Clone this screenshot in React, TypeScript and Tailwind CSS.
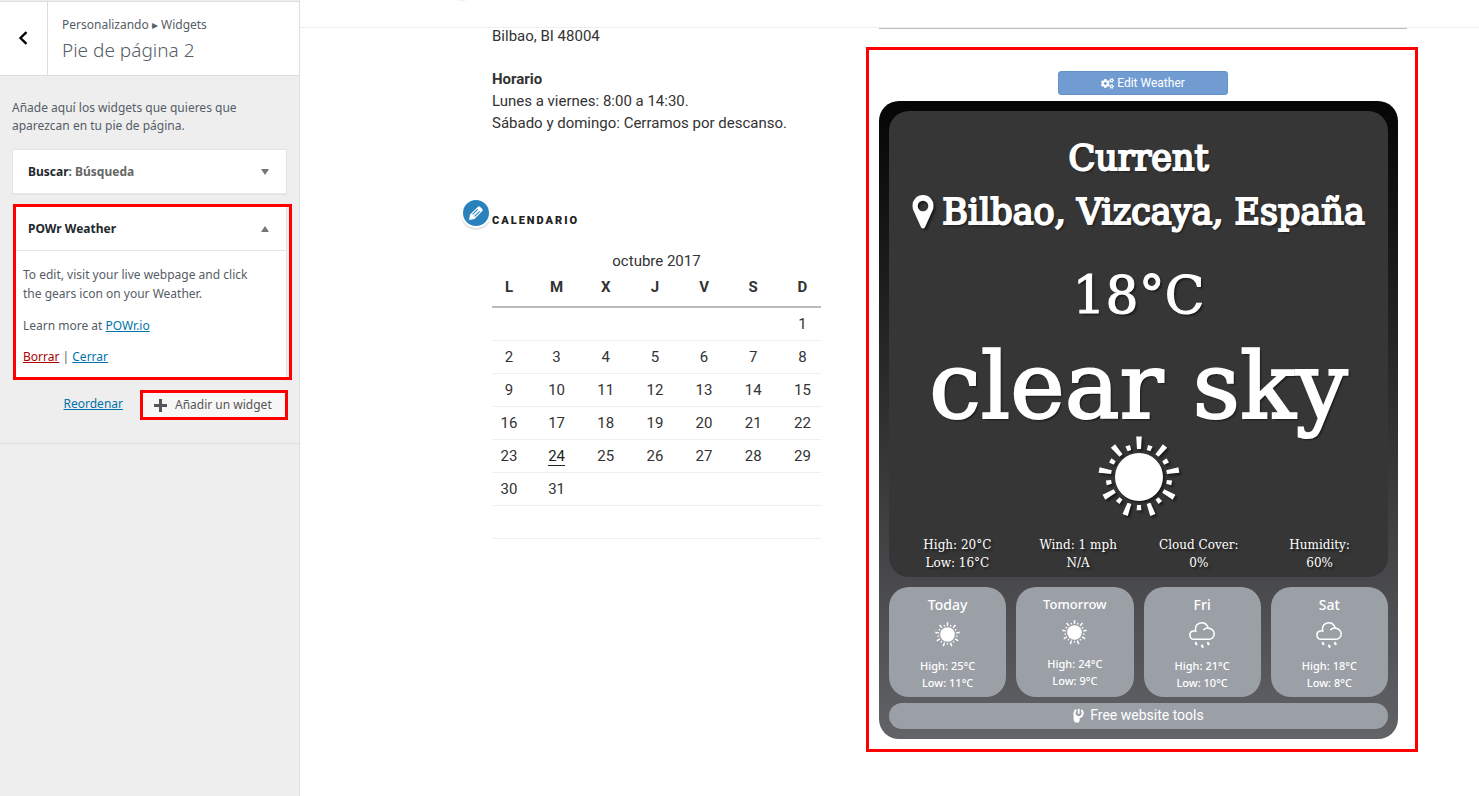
import React from 'react';
import { FaCogs } from 'react-icons/fa';

const WEEKDAYS = ['L', 'M', 'X', 'J', 'V', 'S', 'D'];
const WEEKS: (number | null)[][] = [
  [null, null, null, null, null, null, 1],
  [2, 3, 4, 5, 6, 7, 8],
  [9, 10, 11, 12, 13, 14, 15],
  [16, 17, 18, 19, 20, 21, 22],
  [23, 24, 25, 26, 27, 28, 29],
  [30, 31, null, null, null, null, null],
  [null, null, null, null, null, null, null],
];

const DETAILS = [
  ['High: 20°C', 'Low: 16°C'],
  ['Wind: 1 mph', 'N/A'],
  ['Cloud Cover:', '0%'],
  ['Humidity:', '60%'],
];

const FORECAST = [
  { day: 'Today', icon: 'sun', high: '25', low: '11' },
  { day: 'Tomorrow', icon: 'sun', high: '24', low: '9' },
  { day: 'Fri', icon: 'rain', high: '21', low: '10' },
  { day: 'Sat', icon: 'rain', high: '18', low: '8' },
];

const RAY_ANGLES = [0, 40, 80, 120, 160, 200, 240, 280, 320];

function Sun({ className }: { className: string }) {
  return (
    <svg viewBox="-41 -41 82 82" className={className} fill="white" aria-hidden="true">
      <circle r="24" />
      {RAY_ANGLES.map((a) => (
        <g key={a} transform={`rotate(${a})`}>
          <path d="M-2.8-40.500h5.600L2-28h-4z" />
          <path d="M-1.900 28h3.800l.5 5.200h-4.800z" />
        </g>
      ))}
    </svg>
  );
}

function Rain({ className }: { className: string }) {
  return (
    <svg viewBox="0 0 26 27" className={className} fill="none" stroke="white" strokeWidth="1.500" strokeLinecap="round" aria-hidden="true">
      <path d="M5 18.300A4.200 4.200 0 0 1 4.200 10Q5.500 9.600 6.900 10.200M6.900 10.500A6.300 6.300 0 0 1 6.500 8A6.400 6.400 0 0 1 18.300 4.800A5.500 5.500 0 0 1 19 7Q25 8 25.200 13A5.300 5.300 0 0 1 20 18.300H5" />
      <path d="M14.800 8.600Q16.500 6.900 19 7" />
      <path d="M6.800 22l.6 1.200M13 24.600l.6 1.200M19 22l.6 1.200" strokeWidth="2.200" />
    </svg>
  );
}

function Sidebar() {
  return (
    <aside className="w-[300px] shrink-0 border-r border-[#ddd] bg-[#eee] font-['Noto_Sans',sans-serif] text-[12px] text-[#555d66]">
      <header className="mt-px flex h-[75px] border-y border-[#ddd] bg-white">
        <button type="button" aria-label="Volver" className="flex w-12 items-center justify-center border-r border-[#ddd] pr-0.5 pb-0.5">
          <svg viewBox="0 0 10 14" className="h-3.5 w-2.5" fill="none" stroke="black" strokeWidth="2.300" aria-hidden="true">
            <path d="M8.500 1.200L2.500 7l6 5.800" />
          </svg>
        </button>
        <div className="pt-3.5 pl-3.5">
          <p className="leading-[18px]">Personalizando ▸ Widgets</p>
          <h1 className="text-[19px] leading-8 font-light">Pie de página 2</h1>
        </div>
      </header>
      <div className="border-b border-[#ddd] pt-[23px] pb-[23px]">
        <p className="px-3 leading-[18px]">Añade aquí los widgets que quieres que aparezcan en tu pie de página.</p>
        <section className="mx-3 mt-3.5 flex h-[45px] items-center justify-between border border-[#e5e5e5] bg-white px-[15px] shadow-[0_1px_1px_rgba(0,0,0,0.04)]">
          <h2 className="font-bold text-[#23282d]">
            Buscar<span className="text-[#666]">: Búsqueda</span>
          </h2>
          <button type="button" aria-label="Abrir Buscar" className="p-0.5">
            <svg viewBox="0 0 8 6" className="h-1.5 w-2" fill="#72777c" aria-hidden="true"><path d="M0 0h8L4 6z" /></svg>
          </button>
        </section>
        <section className="mt-2.5 mr-[7px] ml-[13px] h-[176px] border-3 border-[#f00] pr-0.5">
          <div className="h-full border-r border-[#e5e5e5] bg-white">
            <div className="flex h-11 items-center justify-between border-b border-[#e5e5e5] pr-[15px] pl-3">
              <h2 className="font-bold text-[#23282d]">POWr Weather</h2>
              <button type="button" aria-label="Cerrar POWr Weather" className="p-0.5">
                <svg viewBox="0 0 8 6" className="h-1.5 w-2" fill="#72777c" aria-hidden="true"><path d="M0 6h8L4 0z" /></svg>
              </button>
            </div>
            <div className="pt-3.5 pl-[7px] leading-[19px]">
              <p>To edit, visit your live webpage and click<br />the gears icon on your Weather.</p>
              <p className="mt-[13px]">Learn more at <a href="#powr" className="text-[#0073aa] underline">POWr.io</a></p>
              <p className="mt-3">
                <a href="#borrar" className="text-[#a00] underline">Borrar</a> | <a href="#cerrar" className="text-[#0073aa] underline">Cerrar</a>
              </p>
            </div>
          </div>
        </section>
        <div className="mt-2.5 flex justify-end gap-[17px] pr-[11px]">
          <a href="#reordenar" className="leading-[27px] text-[#0073aa] underline">Reordenar</a>
          <button type="button" className="flex h-[30px] w-[148px] items-center gap-2 border-3 border-[#f00] bg-[#f7f7f7] pl-[11px] text-[#555]">
            <svg viewBox="0 0 13 13" className="size-[13px]" fill="#555" aria-hidden="true"><path d="M5 0h3v5h5v3H8v5H5V8H0V5h5z" /></svg>
            Añadir un widget
          </button>
        </div>
      </div>
    </aside>
  );
}

function Calendar() {
  return (
    <table className="w-full table-fixed border-collapse text-center">
      <caption className="h-[22px] leading-[22px]">octubre 2017</caption>
      <thead>
        <tr className="h-[35px] border-b-2 border-[#bbb]">
          {WEEKDAYS.map((d) => (
            <th key={d} scope="col" className="pb-1 pl-3 font-bold first:w-[34px] first:pl-0">{d}</th>
          ))}
        </tr>
      </thead>
      <tbody>
        {WEEKS.map((week, i) => (
          <tr key={i} className="h-[33px] border-b border-[#eee]">
            {week.map((d, j) => (
              <td key={j} className="pl-3 leading-[22px] first:pl-0">
                {d === 24 ? <a href="#24" className="border-b border-[#222] leading-4 text-[#222]">24</a> : d}
              </td>
            ))}
          </tr>
        ))}
      </tbody>
    </table>
  );
}

function Weather() {
  return (
    <section className="mt-[18px] h-[705px] border-3 border-[#f00] pr-[17px] pl-2.5">
      <div className="flex justify-center pt-[21px] pl-[9px]">
        <button type="button" className="flex h-6 w-[170px] items-center justify-center gap-[3px] rounded-[3px] border border-[#6294ce] bg-[#709cd2] font-[Roboto,sans-serif] text-[12px] text-white">
          <FaCogs className="size-[13px]" aria-hidden="true" />
          Edit Weather
        </button>
      </div>
      <div className="mt-1.5 flex h-[638px] flex-col rounded-[20px] bg-linear-to-b from-[#060606] to-[#626367] p-2.5 text-center text-white">
        <div className="h-[466px] rounded-[20px] bg-[#363636] pt-5 font-['DejaVu_Serif',serif] [text-shadow:2px_2px_2px_rgba(0,0,0,0.5)]">
          <h2 className="text-[35px] leading-[54px] [-webkit-text-stroke:2px_white]">Current</h2>
          <h3 className="flex items-center justify-center gap-2 text-[35px] leading-[54px] whitespace-nowrap [-webkit-text-stroke:2px_white]">
            <svg viewBox="0 0 22 34" className="h-[34px] w-[22px] drop-shadow-[2px_2px_1px_rgba(0,0,0,0.5)]" fill="white" aria-hidden="true">
              <path fillRule="evenodd" d="M11 0A10.500 10.500 0 0 1 21.500 11Q21.500 13.500 20.300 16L13 32.200Q11 35 9 32.200L1.700 16Q.5 13.500.5 11A10.500 10.500 0 0 1 11 0ZM11 5.700a5.300 5.300 0 1 0 0 10.600a5.300 5.300 0 1 0 0-10.600Z" />
            </svg>
            Bilbao, Vizcaya, España
          </h3>
          <p className="mt-2.5 text-[52px] leading-[92px] [-webkit-text-stroke:1px_white]">18°C</p>
          <p className="text-[92px] leading-[92px] whitespace-nowrap [-webkit-text-stroke:2px_white]">clear sky</p>
          <Sun className="mx-auto mt-[3px] size-[82px] drop-shadow-[2px_2px_1px_rgba(0,0,0,0.5)]" />
          <div className="mt-[18px] grid grid-cols-4 px-2 text-[12px] leading-[18px]">
            {DETAILS.map(([a, b]) => (
              <p key={a}>{a}<br />{b}</p>
            ))}
          </div>
        </div>
        <div className="mt-2.5 grid h-[110px] grid-cols-4 gap-2.5 font-['Noto_Sans',sans-serif] text-[11px] leading-[17px] font-medium">
          {FORECAST.map((f) => (
            <div key={f.day} className="rounded-[20px] bg-[#9b9fa6] pt-2">
              <h4 className={f.day === 'Tomorrow' ? 'text-[13px] leading-[18px] font-medium' : 'text-[14px] leading-5 font-medium'}>{f.day}</h4>
              <div className="my-1.5 flex h-[26px] items-center justify-center">
                {f.icon === 'sun' ? <Sun className="size-[25px]" /> : <Rain className="h-[27px] w-[26px]" />}
              </div>
              <p className="pt-1">High: {f.high}°C<br />Low: {f.low}°C</p>
            </div>
          ))}
        </div>
        <a href="#tools" className="mt-1.5 flex h-[26px] items-center justify-center gap-1.5 rounded-[13px] bg-[#9b9fa6] pb-0.5 font-[Roboto,sans-serif] text-[14px]">
          <svg viewBox="0 0 11 15" className="h-[15px] w-[11px]" fill="none" stroke="white" aria-hidden="true">
            <path d="M3.300 1.700A4.100 4.100 0 1 0 8.300 1.900" strokeWidth="2" />
            <path d="M5.700 .8v5" strokeWidth="1.800" />
            <path d="M.6 4.500v7.500L2 14.500h4l1-4L3.500 9z" fill="white" stroke="none" />
          </svg>
          Free website tools
        </a>
      </div>
    </section>
  );
}

export default function App() {
  return (
    <div className="flex min-h-screen bg-white">
      <Sidebar />
      <main className="min-w-0 flex-1 font-[Roboto,sans-serif] text-[15px] leading-[22px] text-[#333]">
        <div className="relative h-7 overflow-hidden border-b border-[#eee]">
          <span className="absolute -top-[27px] left-[149px] size-[26px] rounded-full shadow-[0_1px_2px_rgba(0,0,0,0.2)]" />
        </div>
        <div className="grid grid-cols-[329fr_552fr] gap-[45px] pr-[61px] pl-48">
          <div>
            <p className="leading-4">Bilbao, BI 48004</p>
            <p className="mt-6"><strong>Horario</strong><br />Lunes a viernes: 8:00 a 14:30.<br />Sábado y domingo: Cerramos por descanso.</p>
            <div className="relative mt-[78px]">
              <button type="button" aria-label="Editar calendario" className="absolute -top-3.5 -left-[31px] flex size-[30px] items-center justify-center rounded-full border-2 border-white bg-[#2a82bd] shadow-[0_2px_1px_rgba(46,68,83,0.15)]">
                <svg viewBox="0 0 16 16" className="size-4" fill="white" aria-hidden="true">
                  <path fillRule="evenodd" d="M1 15l1-5.500L10 1.700Q11 .7 12 1.700L14.300 4Q15.300 5 14.300 6L6.500 14ZM9.200 4L4.200 9l.8.8 5-5ZM11.200 6l-5 5 .8.8 5-5Z" />
                </svg>
              </button>
              <h2 className="text-[11px] leading-[18px] font-black tracking-[2px] text-[#222] uppercase">Calendario</h2>
            </div>
            <div className="mt-5"><Calendar /></div>
          </div>
          <div>
            <hr className="mr-[11px] ml-[13px] border-[#bbb]" />
            <Weather />
          </div>
        </div>
      </main>
    </div>
  );
}
